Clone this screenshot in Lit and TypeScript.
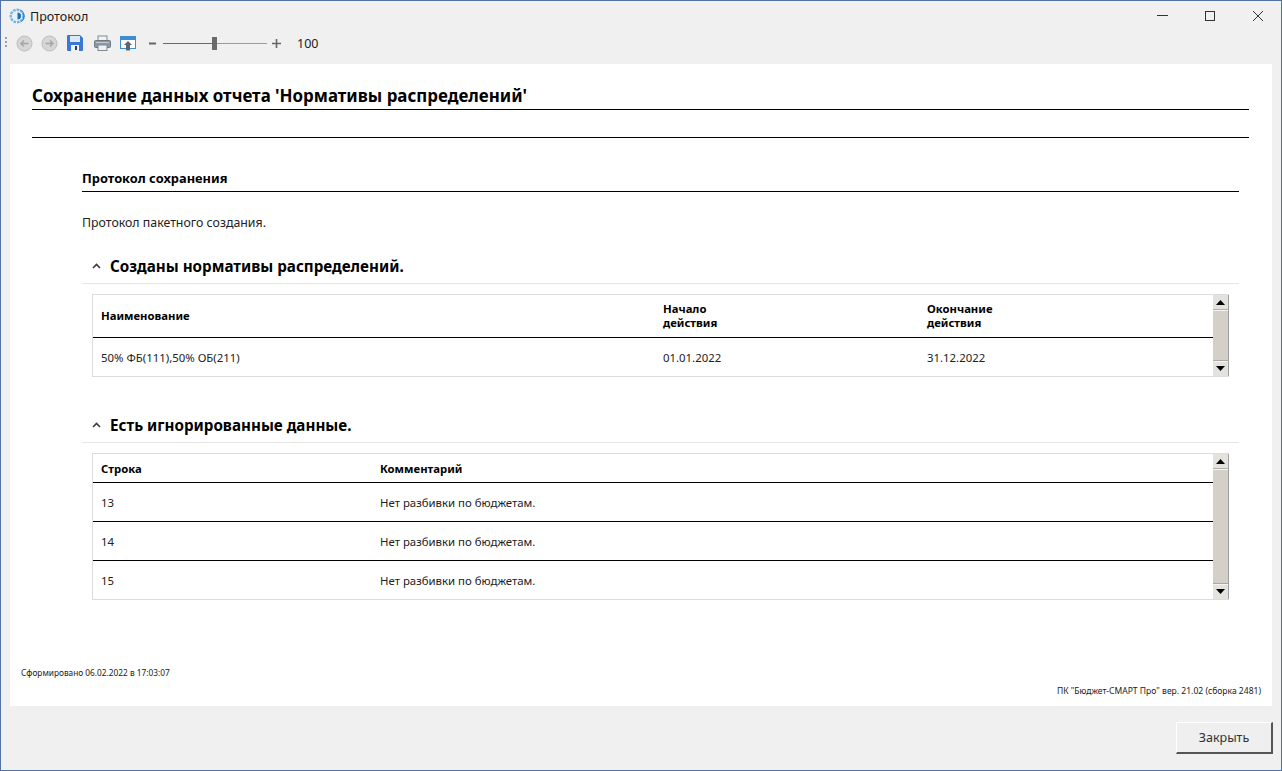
import { LitElement, html, css, svg } from "lit";
import { customElement } from "lit/decorators.js";

// scrollbar arrow, up or down
const arrow = (up: boolean) => html`<svg class="sb-arrow" width="9" height="5" viewBox="0 0 9 5">
  <path fill="#000" d="${up ? "M4.5 0 9 5H0z" : "M0 0h9L4.5 5z"}"></path>
</svg>`;

const chevron = html`<svg class="chev" width="9" height="6" viewBox="0 0 9 6">
  <path fill="none" stroke="#3c3c3c" stroke-width="1.6" d="M1 5l3.5-3.5L8 5"></path>
</svg>`;

const logo = svg`<circle cx="8" cy="8" r="6.2" fill="none" stroke="#6fb6e6" stroke-width="2.4" stroke-dasharray="2.5 1"></circle>
  <path d="M9 1.2a6.8 6.8 0 0 1 0 13.6a7 7 0 0 0 0-13.6z" fill="#1f86cf"></path>
  <circle cx="8" cy="8" r="3.6" fill="#e8f3fb"></circle>
  <path d="M8.5 4.5a3.5 3.5 0 0 1 0 7z" fill="#1f6fb5"></path>`;

@customElement("app-root")
export class AppRoot extends LitElement {
  static styles = css`
    :host {
      display: block;
      height: 771px;
      overflow: hidden;
      font-family: "Noto Sans", "Open Sans", sans-serif;
      color: #000;
    }
    .window {
      box-sizing: border-box;
      height: 771px;
      display: flex;
      flex-direction: column;
      background: #f0f0f0;
      border: 1px solid #5272a4;
    }
    .titlebar {
      height: 30px;
      flex: none;
      display: flex;
      align-items: center;
      padding-left: 8px;
      font-size: 12.5px;
      color: #1a1a1a;
    }
    .titlebar .name {
      margin-left: 5px;
    }
    .win-btns {
      margin-left: auto;
      margin-right: -1px;
      display: flex;
      align-items: center;
    }
    .win-btn {
      width: 48px;
      display: flex;
      justify-content: center;
    }
    .toolbar {
      height: 24px;
      flex: none;
      display: flex;
      align-items: center;
      padding-left: 4px;
      font-size: 12.5px;
      color: #222;
    }
    .grip {
      width: 2px;
      height: 12px;
      margin-right: 9px;
      background: repeating-linear-gradient(to bottom, #a0a0a0 0 2px, transparent 2px 4px);
    }
    .tool {
      display: flex;
      margin-right: 8px;
    }
    .tool.m-9 {
      margin-right: 9px;
    }
    .tool.m-11 {
      margin-right: 11px;
    }
    .tool.m-12 {
      margin-right: 12px;
    }
    .slider {
      position: relative;
      width: 104px;
      height: 1px;
      margin: 0 5px 0 6px;
      background: linear-gradient(to right, #4d6f9f 0 50%, #9a9a9a 50% 100%);
    }
    .thumb {
      position: absolute;
      left: 49px;
      top: -6px;
      width: 5px;
      height: 13px;
      background: #6a6a6a;
    }
    .zoom-val {
      margin-left: 16px;
    }
    .paper {
      box-sizing: border-box;
      flex: none;
      height: 642px;
      margin: 9px 9px 0 9px;
      background: #fff;
      padding: 18px 23px 0 22px;
      display: flex;
      flex-direction: column;
    }
    .title {
      font-size: 16.9px;
      font-weight: 700;
      line-height: 28px;
      height: 26px;
      padding-bottom: 1px;
      border-bottom: 1px solid #000;
    }
    .rule {
      margin-top: 27px;
      border-top: 1px solid #000;
    }
    .body {
      margin: 32px 10px 0 50px;
    }
    .subtitle {
      font-size: 12.85px;
      font-weight: 700;
      line-height: 16px;
      padding-bottom: 5px;
      border-bottom: 1px solid #000;
    }
    .intro {
      margin-top: 22px;
      font-size: 12.35px;
      line-height: 18px;
      color: #222;
    }
    .sec-head {
      display: flex;
      align-items: center;
      height: 32px;
      margin-top: 18px;
      border-bottom: 1px solid #e6e6e6;
      font-size: 15.2px;
      font-weight: 700;
      padding-bottom: 1px;
    }
    .sec-head.second {
      margin-top: 32px;
    }
    .chev {
      margin: 0 9px 0 10px;
    }
    .tbl {
      display: flex;
      margin: 10px 10px 0 10px;
      border: 1px solid #dcdcdc;
      border-right: 0;
      font-size: 11.4px;
    }
    .rows {
      flex: 1;
      min-width: 0;
    }
    .row {
      display: grid;
      align-items: center;
      padding-left: 8px;
      color: #222;
    }
    .row.first {
      grid-template-columns: 562px 264px 1fr;
    }
    .row.second {
      grid-template-columns: 279px 1fr;
    }
    .row.line {
      border-bottom: 1px solid #000;
    }
    .row.head {
      font-size: 11.3px;
      font-weight: 700;
      color: #000;
      line-height: 14px;
    }
    .h-tall {
      height: 42px;
    }
    .h-28 {
      height: 27px;
      padding-top: 1px;
    }
    .h-38 {
      height: 38px;
    }
    .sb {
      width: 16px;
      flex: none;
      display: flex;
      flex-direction: column;
      background: #d4d0c8;
      border-right: 1px solid #a0a0a0;
      box-sizing: border-box;
    }
    .sb-btn {
      height: 15px;
      flex: none;
      display: flex;
      align-items: center;
      justify-content: center;
      background: #e4e2dc;
      border-bottom: 1px solid #f4f4f4;
      box-shadow: inset 0 -1px 0 #b0b0b0;
    }
    .sb-btn.down {
      margin-top: auto;
      box-shadow: inset 0 1px 0 #f4f4f4;
      border-top: 1px solid #a8a8a8;
      border-bottom: 0;
    }
    .foot-left {
      margin: auto 0 0 -11px;
      font-size: 8.3px;
      line-height: 12px;
      color: #222;
    }
    .foot-right {
      margin: 6px -12px 9px 0;
      text-align: right;
      font-size: 8.55px;
      line-height: 12px;
      color: #222;
    }
    .actions {
      flex: 1;
      display: flex;
      justify-content: flex-end;
      align-items: flex-start;
      padding: 16px 8px 0 0;
    }
    .close {
      box-sizing: border-box;
      width: 97px;
      height: 32px;
      font: inherit;
      font-size: 12.5px;
      color: #333;
      background: #efefef;
      border: 0;
      border-top: 1px solid #fff;
      border-left: 1px solid #fff;
      border-right: 2px solid #555;
      border-bottom: 2px solid #555;
      padding: 0;
    }
  `;

  render() {
    return html`
      <div class="window">
        <div class="titlebar">
          <svg width="16" height="16" viewBox="0 0 16 16">${logo}</svg>
          <span class="name">Протокол</span>
          <div class="win-btns">
            <div class="win-btn">
              <svg width="12" height="12" viewBox="0 0 12 12"><path stroke="#333" d="M1 5.5h11"></path></svg>
            </div>
            <div class="win-btn">
              <svg width="12" height="12" viewBox="0 0 12 12"><rect x="1.5" y="1.500" width="9" height="9" fill="none" stroke="#333"></rect></svg>
            </div>
            <div class="win-btn">
              <svg width="12" height="12" viewBox="0 0 12 12"><path stroke="#333" d="M1 1l10 10M11 1L1 11"></path></svg>
            </div>
          </div>
        </div>
        <div class="toolbar">
          <div class="grip"></div>
          <span class="tool">
            <svg width="17" height="17" viewBox="0 0 17 17">
              <circle cx="8.5" cy="8.5" r="7.5" fill="#d6d6d6" stroke="#bcbcbc"></circle>
              <path fill="none" stroke="#a6a6a6" stroke-width="1.5" d="M12.5 8.5h-7M8 5.5l-3 3 3 3"></path>
            </svg>
          </span>
          <span class="tool m-9">
            <svg width="17" height="17" viewBox="0 0 17 17">
              <circle cx="8.5" cy="8.5" r="7.5" fill="#d6d6d6" stroke="#bcbcbc"></circle>
              <path fill="none" stroke="#a6a6a6" stroke-width="1.5" d="M4.5 8.5h7M9 5.5l3 3-3 3"></path>
            </svg>
          </span>
          <span class="tool m-11">
            <svg width="16" height="16" viewBox="0 0 16 16">
              <path fill="#3b78d4" d="M0 1a1 1 0 0 1 1-1h12l3 3v12a1 1 0 0 1-1 1H1a1 1 0 0 1-1-1z"></path>
              <rect x="3" y="1" width="10" height="6" fill="#dbe8f6"></rect>
              <rect x="4" y="10" width="8" height="6" fill="#f2f2f2"></rect>
              <rect x="8" y="11" width="2" height="4" fill="#2b3f66"></rect>
            </svg>
          </span>
          <span class="tool m-9">
            <svg width="17" height="16" viewBox="0 0 17 16">
              <rect x="4" y="1" width="9" height="5" fill="#f2f2f2" stroke="#7f8a94"></rect>
              <rect x=".5" y="5.5" width="16" height="7" rx="1" fill="#8d98a2" stroke="#6f7a84"></rect>
              <rect x="4" y="10" width="9" height="5.5" fill="#eef2f6" stroke="#7f8a94"></rect>
              <rect x="2" y="7" width="13" height="1" fill="#c2cad2"></rect>
            </svg>
          </span>
          <span class="tool m-12">
            <svg width="16" height="16" viewBox="0 0 16 16">
              <rect x=".5" y="1.5" width="15" height="12" fill="#fff" stroke="#3f8fd0"></rect>
              <rect x="1" y="2" width="14" height="3" fill="#3f8fd0"></rect>
              <path fill="#5d6670" d="M8 6l4 4H10v5.5H6V10H4z"></path>
            </svg>
          </span>
          <svg width="9" height="9" viewBox="0 0 9 9"><path stroke="#666" stroke-width="2" d="M1 4.5h7"></path></svg>
          <div class="slider"><div class="thumb"></div></div>
          <svg width="9" height="9" viewBox="0 0 9 9"><path stroke="#666" stroke-width="1.6" d="M0 4.5h9M4.5 0v9"></path></svg>
          <span class="zoom-val">100</span>
        </div>
        <div class="paper">
          <div class="title">Сохранение данных отчета 'Нормативы распределений'</div>
          <div class="rule"></div>
          <div class="body">
            <div class="subtitle">Протокол сохранения</div>
            <div class="intro">Протокол пакетного создания.</div>
            <div class="sec-head">${chevron}<span>Созданы нормативы распределений.</span></div>
            <div class="tbl">
              <div class="rows">
                <div class="row first head line h-tall">
                  <span>Наименование</span><span>Начало<br />действия</span><span>Окончание<br />действия</span>
                </div>
                <div class="row first h-38">
                  <span>50% ФБ(111),50% ОБ(211)</span><span>01.01.2022</span><span>31.12.2022</span>
                </div>
              </div>
              <div class="sb">
                <div class="sb-btn">${arrow(true)}</div>
                <div class="sb-btn down">${arrow(false)}</div>
              </div>
            </div>
            <div class="sec-head second">${chevron}<span>Есть игнорированные данные.</span></div>
            <div class="tbl">
              <div class="rows">
                <div class="row second head line h-28"><span>Строка</span><span>Комментарий</span></div>
                <div class="row second line h-38"><span>13</span><span>Нет разбивки по бюджетам.</span></div>
                <div class="row second line h-38"><span>14</span><span>Нет разбивки по бюджетам.</span></div>
                <div class="row second h-38"><span>15</span><span>Нет разбивки по бюджетам.</span></div>
              </div>
              <div class="sb">
                <div class="sb-btn">${arrow(true)}</div>
                <div class="sb-btn down">${arrow(false)}</div>
              </div>
            </div>
          </div>
          <div class="foot-left">Сформировано 06.02.2022 в 17:03:07</div>
          <div class="foot-right">ПК "Бюджет-СМАРТ Про" вер. 21.02 (сборка 2481)</div>
        </div>
        <div class="actions"><button class="close">Закрыть</button></div>
      </div>
    `;
  }
}
